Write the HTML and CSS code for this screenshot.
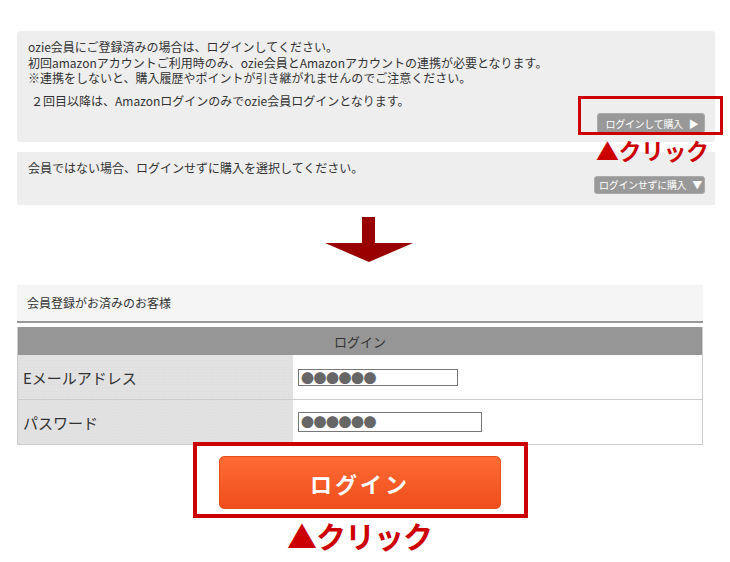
FILE: index.html
```html
<!DOCTYPE html>
<html lang="ja">
<head>
  <meta charset="UTF-8">
  <title>ログイン方法</title>
  <link rel="stylesheet" href="styles.css">
</head>
<body>
  <div class="page">
    <div class="notice notice-member">
      <p>ozie会員にご登録済みの場合は、ログインしてください。<br>
      初回amazonアカウントご利用時のみ、ozie会員とAmazonアカウントの連携が必要となります。<br>
      ※連携をしないと、購入履歴やポイントが引き継がれませんのでご注意ください。</p>
      <p class="second">２回目以降は、Amazonログインのみでozie会員ログインとなります。</p>
      <div class="btn-row">
        <button type="button" class="small-button">ログインして購入<span class="tri">&#9654;</span></button>
      </div>
      <div class="mark mark-small"></div>
      <div class="click click-small">▲クリック</div>
    </div>

    <div class="notice notice-guest">
      <p>会員ではない場合、ログインせずに購入を選択してください。</p>
      <div class="btn-row">
        <button type="button" class="small-button">ログインせずに購入<span class="tri">&#9660;</span></button>
      </div>
    </div>

    <div class="arrow">
      <svg width="88" height="46" viewBox="0 0 88 46">
        <path d="M37 0 H50 V26 H88 L44 45 L0 26 H37 Z" fill="#990000"/>
      </svg>
    </div>

    <div class="login-box">
      <div class="login-title">会員登録がお済みのお客様</div>
      <table class="login-table">
        <thead>
          <tr><th colspan="2">ログイン</th></tr>
        </thead>
        <tbody>
          <tr>
            <td class="label">Eメールアドレス</td>
            <td><div class="field field-email">●●●●●●</div></td>
          </tr>
          <tr>
            <td class="label">パスワード</td>
            <td><div class="field field-pass">●●●●●●</div></td>
          </tr>
        </tbody>
      </table>
      <div class="submit-wrap">
        <div class="mark-big">
          <button type="button" class="login-button">ログイン</button>
        </div>
        <div class="click click-big">▲クリック</div>
      </div>
    </div>
  </div>
</body>
</html>
```

FILE: styles.css
```css
body {
  margin: 0;
  padding: 0;
  background: #fff;
  color: #333;
  font-family: "Noto Sans CJK JP", "Noto Sans", sans-serif;
}

.page {
  width: 730px;
  padding-top: 31px;
}

.notice {
  position: relative;
  box-sizing: border-box;
  width: 698px;
  margin-left: 17px;
  background: #eeeeee;
  border-radius: 4px;
  padding: 8px 10px 0 11px;
  font-size: 12px;
  line-height: 15.5px;
}

.notice p {
  margin: 0;
}

.notice .second {
  margin-top: 7px;
  padding-left: 3px;
}

.notice-member {
  height: 111px;
  z-index: 1;
}

.notice-member .btn-row {
  margin-top: 5px;
}

.notice-guest {
  height: 53px;
  margin-top: 10px;
  border-radius: 0;
  padding-top: 8px;
}

.notice-guest .btn-row {
  margin-top: 0;
}

.btn-row {
  display: flex;
  justify-content: flex-end;
}

.small-button {
  display: inline-flex;
  align-items: center;
  justify-content: center;
  gap: 6px;
  white-space: nowrap;
  padding: 0 0 0 2px;
  background: #999;
  border: 1px solid #aaa;
  border-radius: 3px;
  color: #fff;
  font-family: inherit;
  font-size: 10px;
  letter-spacing: -0.3px;
}

.small-button .tri {
  font-size: 10px;
}

.notice-member .small-button {
  width: 108px;
  height: 20px;
}

.notice-guest .small-button {
  width: 111px;
  height: 18px;
}

/* red annotation frames */
.mark {
  position: absolute;
  border: 3px solid #cc0000;
}

.mark-small {
  left: 561px;
  top: 65px;
  width: 139px;
  height: 33px;
}

.click {
  color: #cc0000;
  font-weight: bold;
  white-space: nowrap;
}

.click-small {
  position: absolute;
  left: 579px;
  top: 105px;
  font-size: 23px;
  line-height: 28px;
  letter-spacing: -0.5px;
}

.arrow {
  display: flex;
  justify-content: center;
  padding: 12px 0 0 8px;
  height: 80px;
  box-sizing: border-box;
}

.arrow svg {
  display: block;
}

.login-box {
  width: 686px;
  margin-left: 17px;
}

.login-title {
  height: 36px;
  background: #f5f5f5;
  border-bottom: 2px solid #999;
  padding-left: 10px;
  font-size: 12px;
  line-height: 36px;
}

.login-table {
  width: 100%;
  margin-top: 4px;
  border-collapse: collapse;
  border: 1px solid #ccc;
  border-top: none;
}

.login-table th {
  height: 28px;
  padding: 0;
  background: #969696;
  font-weight: normal;
  font-size: 13px;
  color: #333;
  text-align: center;
}

.login-table td {
  height: 44px;
  padding: 0 0 0 5px;
  border-bottom: 1px solid #ccc;
  background: #fff;
}

.login-table td.label {
  width: 270px;
  padding-left: 5px;
  background-color: #e0e0e0;
  background-image: radial-gradient(#e9e9e9 0.6px, transparent 0.8px);
  background-size: 3px 3px;
  font-size: 15px;
}

.field {
  box-sizing: border-box;
  height: 17px;
  border: 1px solid #777;
  background: #fff;
  color: #666;
  font-size: 13px;
  line-height: 15px;
  letter-spacing: -0.5px;
  padding-left: 2px;
  overflow: hidden;
}

.field-email {
  width: 160px;
}

.field-pass {
  width: 184px;
  height: 20px;
  line-height: 18px;
}

.submit-wrap {
  display: flex;
  flex-direction: column;
  align-items: flex-start;
  padding-left: 176px;
}

.mark-big {
  box-sizing: border-box;
  width: 335px;
  height: 76px;
  margin-top: -3px;
  border: 4px solid #cc0000;
  padding: 10px 0 0 22px;
  background: #fff;
}

.login-button {
  width: 282px;
  height: 53px;
  border: 1px solid #e4501e;
  border-radius: 5px;
  background: linear-gradient(#ff6b35, #ef4e1b);
  color: #fff;
  font-family: inherit;
  font-size: 22px;
  font-weight: bold;
  letter-spacing: 3px;
  padding: 0;
}

.click-big {
  margin: 0 0 0 94px;
  font-size: 30px;
  line-height: 34px;
  letter-spacing: -1px;
}
```
